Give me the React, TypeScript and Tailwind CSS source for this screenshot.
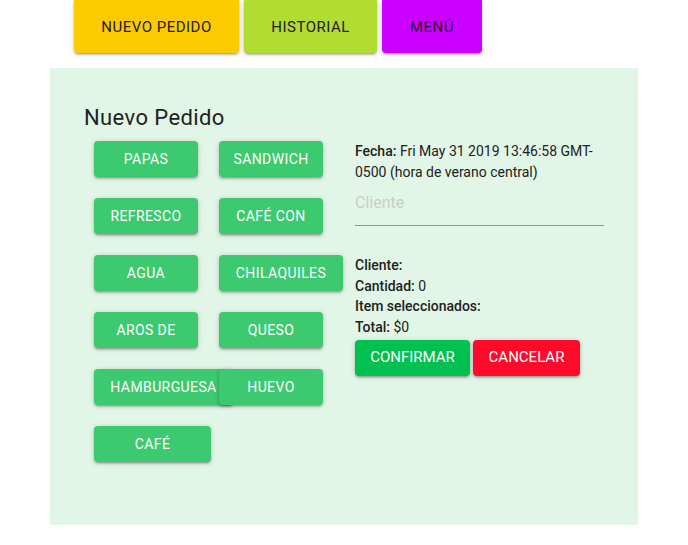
const items = [
  { label: "PAPAS", w: "w-[104px]" },
  { label: "SANDWICH", w: "w-[104px]" },
  { label: "REFRESCO", w: "w-[104px]" },
  { label: "CAFÉ CON", w: "w-[104px]" },
  { label: "AGUA", w: "w-[104px]" },
  { label: "CHILAQUILES", w: "w-[124px]" },
  { label: "AROS DE", w: "w-[104px]" },
  { label: "QUESO", w: "w-[104px]" },
  { label: "HAMBURGUESA", w: "w-[139px]" },
  { label: "HUEVO", w: "w-[104px]" },
  { label: "CAFÉ", w: "w-[117px]" },
];

const shadow = "shadow-[0_1px_5px_rgba(0,0,0,0.2),0_2px_2px_rgba(0,0,0,0.14),0_3px_1px_-2px_rgba(0,0,0,0.12)]";

export default function App() {
  return (
    <div className="w-[688px] h-[545px] bg-white text-[#212121] font-['Roboto',sans-serif]">
      <nav className="flex gap-[5px] pl-[74px]">
        <button className={`w-[165px] h-[53px] pt-[2px] rounded-b bg-[#fecb00] text-[15px] tracking-[0.5px] ${shadow}`}>
          NUEVO PEDIDO
        </button>
        <button className={`w-[133px] h-[53px] pt-[2px] rounded-b bg-[#b1dc31] text-[15px] tracking-[0.5px] ${shadow}`}>
          HISTORIAL
        </button>
        <button className={`w-[100px] h-[53px] pt-[2px] rounded-b bg-[#cc00ff] text-[15px] tracking-[0.5px] ${shadow}`}>
          MENÚ
        </button>
      </nav>

      <main className="mt-[15px] ml-[50px] w-[588px] h-[457px] bg-[#e2f6e7] pl-[34px] pt-[38px]">
        <h1 className="text-[22px] leading-[24px] tracking-[0.4px] text-[#222]">Nuevo Pedido</h1>

        <div className="flex mt-[11px]">
          <div className="w-[271px] pl-[10px] grid grid-cols-[125px_125px] auto-rows-[36px] gap-y-[21px]">
            {items.map((it) => (
              <button
                key={it.label}
                className={`${it.w} h-[36px] rounded bg-[#3dc96f] text-white text-sm tracking-[0.4px] ${shadow}`}
              >
                {it.label}
              </button>
            ))}
          </div>

          <div className="w-[249px] text-sm">
            <p className="leading-[21px]">
              <b className="font-medium">Fecha:</b> Fri May 31 2019 13:46:58 GMT-0500 (hora de verano central)
            </p>
            <input
              placeholder="Cliente"
              className="mt-[9px] w-full h-[34px] pb-[12px] text-base bg-transparent border-b border-[#949494] outline-none placeholder:text-[#c8cfca]"
            />
            <div className="mt-[29px] leading-[20.7px]">
              <p><b className="font-medium">Cliente:</b></p>
              <p><b className="font-medium">Cantidad:</b> 0</p>
              <p><b className="font-medium">Item seleccionados:</b></p>
              <p><b className="font-medium">Total:</b> $0</p>
            </div>
            <div className="flex gap-[3px] mt-[2px]">
              <button className={`w-[115px] h-[36px] rounded bg-[#00c050] text-white text-[15px] ${shadow}`}>
                CONFIRMAR
              </button>
              <button className={`w-[107px] h-[36px] rounded bg-[#ff0a2a] text-white text-[15px] ${shadow}`}>
                CANCELAR
              </button>
            </div>
          </div>
        </div>
      </main>
    </div>
  );
}
